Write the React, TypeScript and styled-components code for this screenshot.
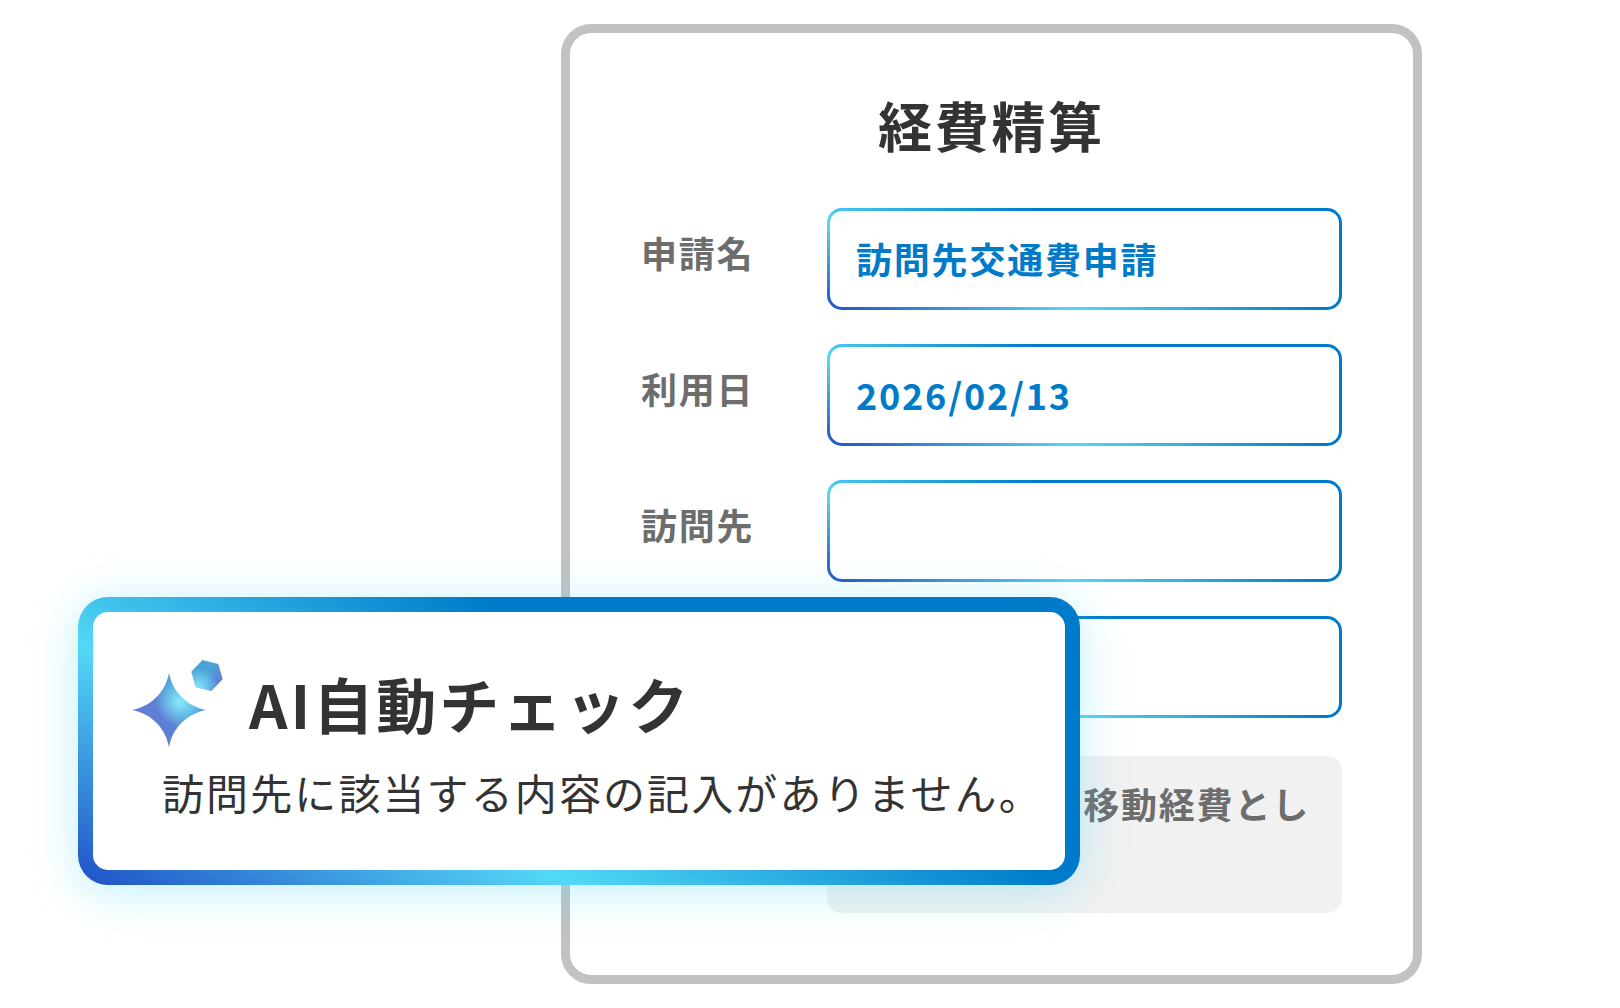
import React from "react";
import styled, { createGlobalStyle, css } from "styled-components";

const GlobalStyle = createGlobalStyle`
  *, *::before, *::after {
    box-sizing: border-box;
    letter-spacing: 0.05em;
  }
  body {
    margin: 0;
    background: #fff;
    color: #333;
    font-family: "Noto Sans CJK JP", "Noto Sans", sans-serif;
  }
`;

const stops = "#1e50c6 0%, #54d8f6 31%, #007bca 62%";

const Stage = styled.main`
  position: relative;
  display: grid;
  grid-template-columns: 561fr 861fr 198fr;
  padding: 24px 0;
`;

const Card = styled.form`
  grid-column: 2;
  padding: 53px 71px 62px;
  background: #fff;
  border: 9px solid #c1c2c4;
  border-radius: 30px;
`;

const CardTitle = styled.h1`
  margin: 0 0 44px;
  font-size: 54px;
  line-height: 78px;
  font-weight: 700;
  text-align: center;
`;

const Rows = styled.div`
  display: grid;
  gap: 34px;
  margin-bottom: 38px;
`;

const Row = styled.div`
  display: grid;
  grid-template-columns: 186px minmax(0, 1fr);
`;

const Label = styled.label`
  padding-top: 18px;
  color: #6d6d6d;
  font-size: 36px;
  line-height: 52px;
  font-weight: 700;
`;

const control = css`
  grid-column: 2;
  width: 100%;
  margin: 0;
  border-radius: 15px;
  outline: none;
  font: inherit;
  font-size: 36px;
  line-height: 52px;
  font-weight: 700;
`;

const TextInput = styled.input`
  ${control}
  height: 102px;
  padding: 0 26px 2px;
  border: 3px solid transparent;
  background:
    linear-gradient(#fff, #fff) padding-box,
    linear-gradient(19deg, ${stops}) border-box;
  color: #007bca;
`;

const Note = styled.textarea`
  ${control}
  display: block;
  height: 157px;
  padding: 21px 32px;
  border: 0;
  background: #f1f1f1;
  color: #6d6d6d;
  text-align: right;
  resize: none;
  overflow: hidden;
`;

const Notice = styled.section`
  position: absolute;
  top: 597px;
  left: 78px;
  width: max-content;
  padding: 48px 22px 48px 39px;
  border: 15px solid transparent;
  border-radius: 30px;
  background:
    linear-gradient(#fff, #fff) padding-box,
    linear-gradient(26deg, ${stops}) border-box;
  box-shadow: 0 6px 45px rgba(84, 216, 246, 0.38);
`;

const NoticeHead = styled.div`
  display: flex;
  gap: 25px;
`;

const NoticeTitle = styled.h2`
  margin: 0;
  font-size: 60px;
  line-height: 86px;
  font-weight: 700;
`;

const NoticeText = styled.p`
  margin: 13px 0 0;
  padding-left: 30px;
  font-size: 42px;
  line-height: 61px;
`;

const STAR =
  "M37 12.5C40 32 56 47 74 50C56 53 40 68 37 87.5C34 68 18 53 0 50C18 47 34 32 37 12.5Z";
const GEM = "70.4,0 86.3,4 90.7,19.3 79.2,31 63.7,27 59.3,11.7";

function Sparkle() {
  return (
    <svg width="92" height="88" viewBox="0 0 92 88" aria-hidden="true">
      <defs>
        <linearGradient id="base" gradientUnits="userSpaceOnUse" x1="26" y1="52" x2="48" y2="36">
          <stop offset="0" stopColor="#5f7fd4" />
          <stop offset="1" stopColor="#4ba2d8" />
        </linearGradient>
        <radialGradient id="glow" gradientUnits="userSpaceOnUse" cx="48" cy="42" r="24">
          <stop offset="0" stopColor="#86e6fa" />
          <stop offset="0.15" stopColor="#86e6fa" stopOpacity="0.9" />
          <stop offset="1" stopColor="#86e6fa" stopOpacity="0" />
        </radialGradient>
        <linearGradient id="gemBase" gradientUnits="userSpaceOnUse" x1="78" y1="12" x2="89" y2="18">
          <stop offset="0" stopColor="#4ba2d8" />
          <stop offset="1" stopColor="#5f7fd4" />
        </linearGradient>
        <radialGradient id="gemGlow" gradientUnits="userSpaceOnUse" cx="66" cy="28" r="20">
          <stop offset="0" stopColor="#86e6fa" />
          <stop offset="1" stopColor="#86e6fa" stopOpacity="0" />
        </radialGradient>
      </defs>
      <path d={STAR} fill="url(#base)" />
      <path d={STAR} fill="url(#glow)" />
      <polygon points={GEM} fill="url(#gemBase)" />
      <polygon points={GEM} fill="url(#gemGlow)" />
    </svg>
  );
}

export default function App() {
  return (
    <>
      <GlobalStyle />
      <Stage>
        <Card>
          <CardTitle>経費精算</CardTitle>
          <Rows>
            <Row>
              <Label htmlFor="title">申請名</Label>
              <TextInput id="title" defaultValue="訪問先交通費申請" />
            </Row>
            <Row>
              <Label htmlFor="date">利用日</Label>
              <TextInput id="date" defaultValue="2026/02/13" />
            </Row>
            <Row>
              <Label htmlFor="visit">訪問先</Label>
              <TextInput id="visit" />
            </Row>
            <Row>
              <TextInput aria-label="金額" />
            </Row>
          </Rows>
          <Row>
            <Note aria-label="備考" defaultValue="移動経費とし" />
          </Row>
        </Card>
        <Notice role="alert">
          <NoticeHead>
            <Sparkle />
            <NoticeTitle>AI自動チェック</NoticeTitle>
          </NoticeHead>
          <NoticeText>訪問先に該当する内容の記入がありません。</NoticeText>
        </Notice>
      </Stage>
    </>
  );
}
